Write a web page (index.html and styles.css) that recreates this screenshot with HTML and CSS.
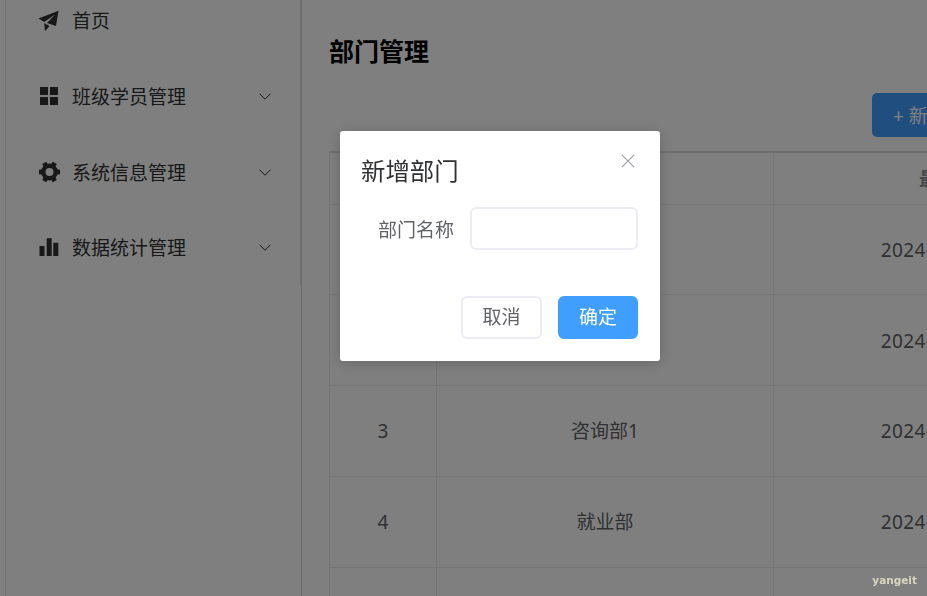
FILE: index.html
```html
<!DOCTYPE html>
<html lang="zh-CN">
<head>
<meta charset="utf-8">
<title>部门管理</title>
<link rel="stylesheet" href="styles.css">
</head>
<body>
<div class="app">
  <aside class="sidebar">
    <ul class="menu">
      <li class="menu-item">
        <svg class="menu-icon" viewBox="0 0 22 22"><path d="M20.500 .8 .5 8.500l5.700 3.500L17 4.500 9 13l9 3z"/><path d="M6.200 13 7 21.200l4.500-5.200z"/></svg>
        <span class="menu-text">首页</span>
      </li>
      <li class="menu-item">
        <svg class="menu-icon" viewBox="0 0 22 22"><path d="M2 2h8v8H2zM12 2h8v8h-8zM2 12h8v8H2zM12 12h8v8h-8z"/></svg>
        <span class="menu-text">班级学员管理</span>
        <svg class="chevron" viewBox="0 0 12 7"><path d="M.5.7 6 6.200 11.500 .7"/></svg>
      </li>
      <li class="menu-item">
        <svg class="menu-icon" viewBox="0 0 22 22">
          <circle class="gear-ring" cx="11.500" cy="11" r="6.200"/>
          <g class="gear-teeth">
            <rect x="9.100" y=".5" width="4.800" height="5" transform="rotate(30 11.500 11)"/>
            <rect x="9.100" y=".5" width="4.800" height="5" transform="rotate(90 11.500 11)"/>
            <rect x="9.100" y=".5" width="4.800" height="5" transform="rotate(150 11.500 11)"/>
            <rect x="9.100" y=".5" width="4.800" height="5" transform="rotate(210 11.500 11)"/>
            <rect x="9.100" y=".5" width="4.800" height="5" transform="rotate(270 11.500 11)"/>
            <rect x="9.100" y=".5" width="4.800" height="5" transform="rotate(330 11.500 11)"/>
          </g>
        </svg>
        <span class="menu-text">系统信息管理</span>
        <svg class="chevron" viewBox="0 0 12 7"><path d="M.5.7 6 6.200 11.500 .7"/></svg>
      </li>
      <li class="menu-item">
        <svg class="menu-icon" viewBox="0 0 22 22"><path d="M1.500 9h5v10h-5zM8.700 1.300h5V19h-5zM15.300 5.700h5V19h-5z"/></svg>
        <span class="menu-text">数据统计管理</span>
        <svg class="chevron" viewBox="0 0 12 7"><path d="M.5.7 6 6.200 11.500 .7"/></svg>
      </li>
    </ul>
  </aside>
  <main class="content">
    <h1 class="page-title">部门管理</h1>
    <div class="toolbar"><button class="add-btn">+ 新增部门</button></div>
    <table class="dept-table">
      <colgroup><col class="col-no"><col class="col-name"><col class="col-time"></colgroup>
      <thead><tr><th>序号</th><th>部门名称</th><th class="th-time">最后操作时间</th></tr></thead>
      <tbody>
        <tr><td>1</td><td>学工部</td><td class="td-time">2024-10-27 11:30:25</td></tr>
        <tr><td>2</td><td>教研部</td><td class="td-time">2024-10-27 11:30:25</td></tr>
        <tr><td>3</td><td>咨询部1</td><td class="td-time">2024-10-27 11:30:25</td></tr>
        <tr><td>4</td><td>就业部</td><td class="td-time">2024-10-27 11:30:25</td></tr>
        <tr><td>5</td><td>人事部</td><td class="td-time">2024-10-27 11:30:25</td></tr>
      </tbody>
    </table>
  </main>
</div>
<div class="mask"></div>
<section class="dialog">
  <header class="dialog-head">
    <h2 class="dialog-title">新增部门</h2>
    <svg class="dialog-close" viewBox="0 0 16 16"><path d="M1 1l14 14M15 1 1 15"/></svg>
  </header>
  <div class="form-row">
    <label class="form-label" for="dept">部门名称</label>
    <input class="form-input" id="dept" type="text">
  </div>
  <footer class="dialog-foot">
    <button class="btn">取消</button>
    <button class="btn btn-primary">确定</button>
  </footer>
</section>
<div class="watermark">yangeit</div>
</body>
</html>
```
FILE: styles.css
```css
* { box-sizing: border-box; }
html, body { margin: 0; height: 100%; overflow: hidden; background: #fff; }
body { font-family: "Noto Sans", "Noto Sans CJK SC", sans-serif; font-size: 19px; color: #303133; }
.app { display: flex; height: 596px; width: 1300px; padding-left: 5px; }
.sidebar { width: 297px; flex: none; border-left: 1px solid #e0e0e0; border-right: 1px solid #d8d8d8; }
.menu { list-style: none; margin: -17px 0 0; padding: 0; height: 302px; border-right: 1px solid #dcdcdc; }
.menu-item { height: 75.67px; display: flex; align-items: center; padding: 0 29px 0 32px; color: #303133; }
.menu-text { margin-top: 1px; line-height: 26px; }
.menu-icon { width: 22px; height: 22px; margin-right: 12px; flex: none; fill: #303133; overflow: visible; }
.gear-ring { fill: none; stroke: #303133; stroke-width: 4.400; }
.gear-teeth { fill: #303133; }
.chevron { width: 12px; height: 7px; margin-left: auto; fill: none; stroke: #303133; stroke-width: 1; }
.content { flex: none; width: 830px; padding-left: 27px; }
.page-title { margin: 34px 0 0; font-size: 25px; line-height: 34px; font-weight: 700; color: #000; }
.toolbar { margin-top: 25px; height: 44px; padding-left: 543px; }
.add-btn { width: 160px; height: 44px; border: 0; border-radius: 5px; background: #409eff; color: #fff; font: inherit; text-align: left; padding-left: 21px; }
.dept-table { margin-top: 14px; width: 831px; table-layout: fixed; border-collapse: collapse; border-top: 2px solid #dcdfe6; border-left: 1px solid #ebeef5; }
.col-no { width: 107px; }
.col-name { width: 337px; }
.col-time { width: 387px; }
.dept-table th, .dept-table td { border-right: 1px solid #ebeef5; border-bottom: 1px solid #ebeef5; text-align: center; font-size: 19px; line-height: 26px; color: #606266; padding: 1px 0 0; }
.dept-table th { height: 52px; font-weight: 700; color: #909399; }
.dept-table .th-time { padding-left: 18px; }
.dept-table .td-time { padding-left: 14.600px; letter-spacing: .4px; }
.dept-table td { height: 90.75px; font-weight: 400; }
.mask { position: fixed; inset: 0; background: rgba(0, 0, 0, .5); }
.dialog { position: fixed; left: 340px; top: 131px; width: 320px; height: 230px; background: #fff; border-radius: 3px; box-shadow: 0 2px 14px rgba(0, 0, 0, .2); padding: 21px 22px 22px 21px; display: flex; flex-direction: column; }
.dialog-head { display: flex; justify-content: space-between; align-items: flex-start; height: 36px; }
.dialog-title { margin: 1px 0 0; font-size: 24.4px; line-height: 36px; font-weight: 400; color: #303133; }
.dialog-close { width: 14px; height: 14px; margin: 2px 3px 0 0; fill: none; stroke: #a0a3a9; stroke-width: 1.500; }
.form-row { display: flex; align-items: center; margin-top: 19px; padding-left: 17px; }
.form-label { width: 76px; margin: 2px 16px 0 0; flex: none; color: #606266; font-size: 19px; line-height: 26px; }
.form-input { width: 168px; height: 43px; border: 2px solid #ebedf2; border-radius: 6px; background: #fff; }
.dialog-foot { margin-top: auto; display: flex; justify-content: flex-end; gap: 16px; }
.btn { width: 81px; height: 43px; border: 2px solid #ebedf2; border-radius: 6px; background: #fff; color: #606266; font: inherit; font-size: 19px; line-height: 26px; padding: 0 0 2px; }
.btn-primary { width: 80px; background: #409eff; border-color: #409eff; color: #fff; }
.watermark { position: fixed; right: 10px; bottom: 9px; font-family: "DejaVu Sans", sans-serif; font-size: 10.500px; font-weight: 700; line-height: 13px; color: #d8d4c0; }
```
